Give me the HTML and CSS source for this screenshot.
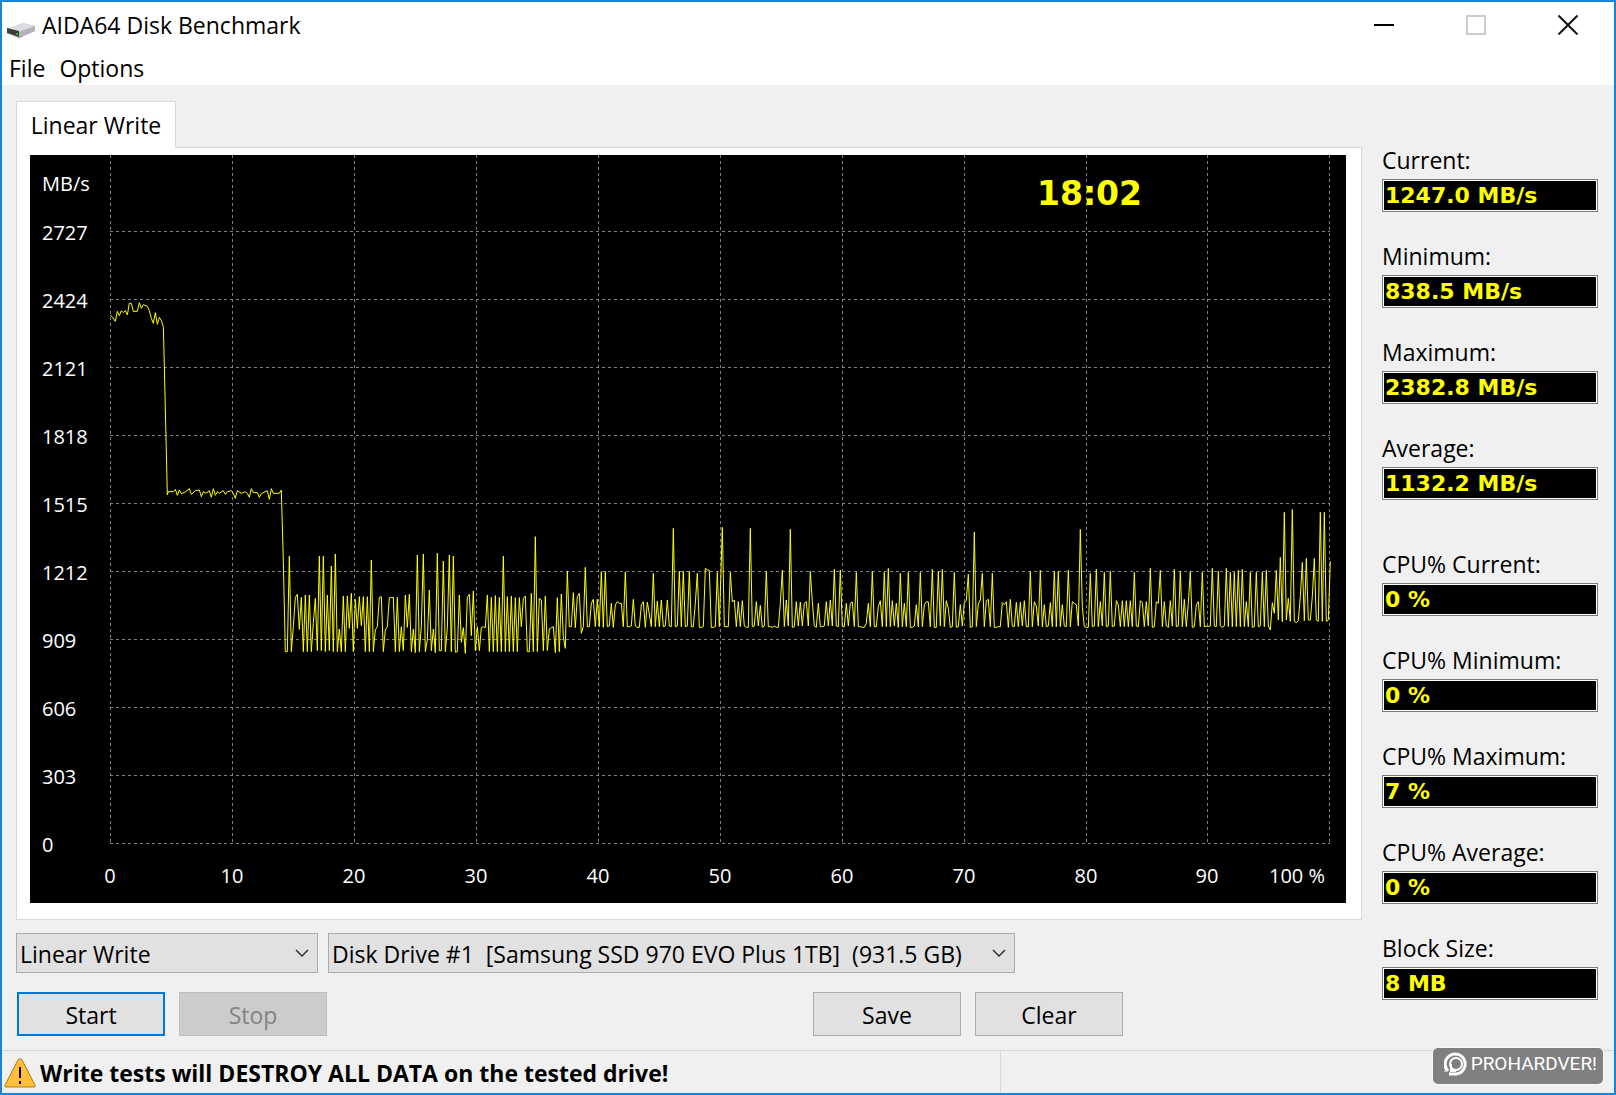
FILE: index.html
```html
<!DOCTYPE html>
<html lang="en">

<head>
    <meta charset="UTF-8">
    <meta name="viewport" content="width=device-width, initial-scale=1.0">
    <title>AIDA64 Disk Benchmark</title>
    <link rel="stylesheet" href="styles.css">
</head>

<body>
    <header class="title-bar">
        <svg class="disk-icon" width="28" height="16" viewBox="0 0 28 16">
            <path d="M0 6 L16 0 L28 3 L28 8 L12 15 L0 10z" fill="#c4c5c8" />
            <path d="M0 6 L16 0 L28 3 L12 9z" fill="#dcdde0" />
            <path d="M12 9 L28 3 L28 8 L12 15z" fill="#b4b5ba" />
            <path d="M0 5 L12 8 L12 14 L0 10z" fill="#3c3d3c" />
            <path d="M0 10 L12 14 L18 12 L12 15z" fill="#8e8f92" />
            <path d="M9 10h2v2h-2z" fill="#22b83a" />
        </svg>
        <h1>AIDA64 Disk Benchmark</h1>
        <div class="window-buttons">
            <button type="button" aria-label="Minimize">
                <svg width="20" height="20" viewBox="0 0 20 20"><path d="M0 10h20" stroke="#000" stroke-width="2" /></svg>
            </button>
            <button type="button" aria-label="Maximize" disabled>
                <svg width="20" height="20" viewBox="0 0 20 20"><path d="M1 1h18v18h-18z" fill="none" stroke="#ccc" stroke-width="2" /></svg>
            </button>
            <button type="button" aria-label="Close">
                <svg width="20" height="20" viewBox="0 0 20 20"><path d="M0.500 0.500 L19.500 19.500 M19.500 0.500 L0.500 19.500" stroke="#111" stroke-width="2" /></svg>
            </button>
        </div>
    </header>
    <nav class="menu">
        <a href="#">File</a>
        <a href="#">Options</a>
    </nav>

    <main class="content">
        <section class="left">
            <div class="tabs">
                <button class="tab" type="button">Linear Write</button>
            </div>
            <div class="panel">
                <svg class="chart" viewBox="0 0 1316 748">
                    <g id="grid" class="grid"></g>
                    <g id="labels" class="labels">
                        <text x="12" y="36">MB/s</text>
                    </g>
                    <g transform="translate(0 325) scale(0.33333)">
                        <polyline id="trace" class="trace" />
                    </g>
                    <text class="clock" x="1007" y="50">18:02</text>
                </svg>
            </div>
            <div class="row selects">
                <div class="select test-select">
                    <select aria-label="Test">
                        <option>Linear Write</option>
                    </select>
                    <svg width="14" height="8" viewBox="0 0 14 8"><path d="M1 1l6 6 6-6" /></svg>
                </div>
                <div class="select drive-select">
                    <select aria-label="Drive">
                        <option>Disk Drive #1&nbsp; [Samsung SSD 970 EVO Plus 1TB]&nbsp; (931.5 GB)</option>
                    </select>
                    <svg width="14" height="8" viewBox="0 0 14 8"><path d="M1 1l6 6 6-6" /></svg>
                </div>
            </div>
            <div class="row buttons">
                <button class="btn default" type="button">Start</button>
                <button class="btn" type="button" disabled>Stop</button>
                <button class="btn save" type="button">Save</button>
                <button class="btn" type="button">Clear</button>
            </div>
        </section>

        <aside class="side">
            <div class="field">
                <label for="current">Current:</label>
                <input type="text" id="current" value="1247.0 MB/s" readonly>
            </div>
            <div class="field">
                <label for="minimum">Minimum:</label>
                <input type="text" id="minimum" value="838.5 MB/s" readonly>
            </div>
            <div class="field">
                <label for="maximum">Maximum:</label>
                <input type="text" id="maximum" value="2382.8 MB/s" readonly>
            </div>
            <div class="field">
                <label for="average">Average:</label>
                <input type="text" id="average" value="1132.2 MB/s" readonly>
            </div>
            <div class="field cpu">
                <label for="cpu-current">CPU% Current:</label>
                <input type="text" id="cpu-current" value="0 %" readonly>
            </div>
            <div class="field">
                <label for="cpu-minimum">CPU% Minimum:</label>
                <input type="text" id="cpu-minimum" value="0 %" readonly>
            </div>
            <div class="field">
                <label for="cpu-maximum">CPU% Maximum:</label>
                <input type="text" id="cpu-maximum" value="7 %" readonly>
            </div>
            <div class="field">
                <label for="cpu-average">CPU% Average:</label>
                <input type="text" id="cpu-average" value="0 %" readonly>
            </div>
            <div class="field">
                <label for="block-size">Block Size:</label>
                <input type="text" id="block-size" value="8 MB" readonly>
            </div>
        </aside>
    </main>

    <footer class="status-bar">
        <div class="status-text">
            <svg width="32" height="30" viewBox="0 0 32 30">
                <path d="M14 2 Q16 -1 18 2 L31 27 Q32 29 30 29 H2 Q0 29 1 27z" fill="#ffbf3a" stroke="#b27a1c" />
                <path d="M15 9h2v11h-2z M15 23h2v3h-2z" fill="#000" />
            </svg>
            <span>Write tests will DESTROY ALL DATA on the tested drive!</span>
        </div>
        <div class="watermark">
            <svg width="23" height="24" viewBox="0 0 23 24">
                <path d="M4 19 A10 10 0 1 1 12 22 H5" fill="none" stroke="#fff" stroke-width="3" />
                <circle cx="12" cy="12" r="6" fill="none" stroke="#fff" stroke-width="2" />
                <path d="M7 12v7h5" fill="none" stroke="#fff" stroke-width="2" />
                <path d="M1 9v11" stroke="#fff" stroke-dasharray="2 1" />
            </svg>
            <span>PROHARDVER!</span>
        </div>
    </footer>

    <script src="script.js"></script>
</body>

</html>
```

FILE: styles.css
```css
* {
    padding: 0;
    margin: 0;
    box-sizing: border-box;
    font-family: "Open Sans", "Noto Sans", sans-serif;
}

body {
    min-height: 100vh;
    display: flex;
    flex-direction: column;
    border: 2px solid #1883d7;
    background-color: #f0f0f0;
    color: black;
    font-size: 23px;
    line-height: 32px;
}

button,
input,
select {
    font-size: 23px;
    color: black;
}

a {
    color: black;
    text-decoration: none;
}

.title-bar {
    display: flex;
    align-items: center;
    gap: 7px;
    height: 45px;
    padding-left: 5px;
    background-color: white;
}

.title-bar h1 {
    font-size: 23px;
    font-weight: normal;
}

.disk-icon {
    margin-top: 12px;
}

.window-buttons {
    display: flex;
    margin-left: auto;
}

.window-buttons button {
    display: flex;
    justify-content: center;
    align-items: center;
    width: 92px;
    height: 44px;
    border: none;
    background-color: white;
}

.menu {
    display: flex;
    gap: 14px;
    height: 38px;
    padding: 5px 7px;
    background-color: white;
}

.content {
    display: flex;
    gap: 20px;
    padding: 16px 16px 14px 14px;
}

.left {
    flex: 1;
}

.tabs {
    display: flex;
}

.tab {
    position: relative;
    height: 47px;
    width: 160px;
    margin-bottom: -1px;
    padding-bottom: 1px;
    border: 1px solid #d9d9d9;
    border-bottom: none;
    background-color: white;
}

.panel {
    padding: 7px 15px 16px 13px;
    border: 1px solid #d9d9d9;
    background-color: white;
}

.chart {
    display: block;
    width: 100%;
    background-color: black;
}

.grid line {
    stroke: #808080;
    stroke-dasharray: 3 3;
    shape-rendering: crispEdges;
}

.labels text {
    fill: white;
    font-size: 20px;
    white-space: pre;
}

.labels .percent {
    text-anchor: middle;
}

.trace {
    fill: none;
    stroke: #ff0;
    stroke-width: 3px;
    stroke-linejoin: bevel;
    shape-rendering: crispEdges;
}

.clock {
    fill: #ff0;
    font-family: "DejaVu Sans", sans-serif;
    font-size: 33px;
    font-weight: bold;
}

.row {
    display: flex;
}

.selects {
    gap: 10px;
    margin-top: 13px;
}

.select {
    display: grid;
    align-items: center;
}

.select select,
.select svg {
    grid-area: 1 / 1;
}

.select select {
    appearance: none;
    height: 40px;
    padding: 2px 0 0 3px;
    border: 1px solid #adadad;
    background-color: #e1e1e1;
}

.select svg {
    justify-self: end;
    margin-right: 9px;
    fill: none;
    stroke: #333;
    stroke-width: 1.500;
    pointer-events: none;
}

.test-select {
    width: 302px;
}

.drive-select {
    width: 687px;
}

.buttons {
    gap: 14px;
    margin-top: 19px;
    padding-left: 1px;
}

.btn {
    width: 148px;
    height: 44px;
    padding-top: 2px;
    border: 1px solid #adadad;
    background-color: #e1e1e1;
}

.btn.default {
    border: 2px solid #0078d7;
}

.btn:disabled {
    border-color: #bfbfbf;
    background-color: #ccc;
    color: #838383;
}

.btn.save {
    margin-left: 472px;
}

.side {
    display: flex;
    flex-direction: column;
    gap: 28px;
    width: 216px;
    padding-top: 43px;
}

.field {
    display: flex;
    flex-direction: column;
    gap: 3px;
}

.field.cpu {
    margin-top: 20px;
}

.field input {
    width: 100%;
    height: 33px;
    padding-left: 2px;
    border: 1px solid #7a7a7a;
    outline: 1px solid white;
    outline-offset: -2px;
    background-color: black;
    color: #ff0;
    font-family: "DejaVu Sans", sans-serif;
    font-size: 22px;
    font-weight: bold;
}

.status-bar {
    position: relative;
    flex: 1;
    display: flex;
    border-top: 1px solid #d7d7d7;
}

.status-text {
    display: flex;
    align-items: center;
    gap: 4px;
    width: 62%;
    margin: 1px 0;
    padding: 2px 0 0 2px;
    border-right: 1px solid #d7d7d7;
    font-weight: bold;
}

.watermark {
    position: absolute;
    right: 11px;
    top: -3px;
    display: flex;
    align-items: center;
    gap: 4px;
    height: 36px;
    padding: 0 6px 4px 11px;
    border-radius: 5px;
    box-shadow: 0 0 0 1px #f8f8f8;
    background-color: #808080;
    color: white;
}

.watermark span {
    font-family: Roboto, sans-serif;
    font-size: 19px;
}
```

FILE: script.js
```javascript
const svgNS = "http://www.w3.org/2000/svg";
let grid = document.getElementById("grid");
let labels = document.getElementById("labels");

function addLine(x1, y1, x2, y2) {
    let line = document.createElementNS(svgNS, "line");
    line.setAttribute("x1", x1);
    line.setAttribute("y1", y1);
    line.setAttribute("x2", x2);
    line.setAttribute("y2", y2);
    grid.appendChild(line);
}

function addLabel(x, y, value, className) {
    let text = document.createElementNS(svgNS, "text");
    text.setAttribute("x", x);
    text.setAttribute("y", y);
    if (className) text.setAttribute("class", className);
    text.textContent = value;
    labels.appendChild(text);
}

// speed rows, 303 MB/s apart
for (let i = 0; i < 10; i++) {
    let y = 688 - i * 68;
    addLine(80, y + 0.5, 1300, y + 0.5);
    addLabel(12, y + 9, i * 303);
}

// progress columns, 10% apart
for (let i = 0; i <= 10; i++) {
    let x = 80 + Math.round(i * 121.94);
    addLine(x + 0.5, 0, x + 0.5, 688);
    if (i < 10) addLabel(x, 728, i * 10, "percent");
}
addLabel(1239, 728, "100 %");

// cached part of the drive: x, y pairs
let points = [
    [241, -495], [248, -487], [256, -476], [262, -506], [268, -493], [274, -508], [280, -502], [286, -508],
    [292, -495], [298, -530], [304, -530], [310, -506], [322, -506], [328, -532], [334, -515], [340, -526],
    [352, -521], [358, -508], [364, -485], [370, -470], [376, -502], [382, -467], [388, -488], [394, -478],
    [400, -460], [404, -300], [412, 45], [415, 35], [430, 35], [436, 28], [442, 46], [448, 30], [454, 41],
    [466, 36], [478, 26], [484, 43], [496, 32], [508, 30], [514, 50], [520, 35], [528, 40], [538, 32],
    [544, 52], [550, 26], [556, 46], [562, 35], [568, 40], [580, 32], [586, 43], [592, 35], [604, 32],
    [610, 40], [616, 55], [622, 32], [634, 40], [646, 35], [652, 40], [658, 52], [664, 26], [670, 38],
    [682, 38], [688, 52], [694, 41], [712, 32], [718, 58], [724, 26], [730, 40], [748, 40]
];

// evenly spaced samples
let runs = [
    {
        x: 754,
        y: [
            30, 245, 515, 515, 228, 515, 440, 352, 343, 448, 352, 515, 345, 515, 345, 515, 430, 355, 512, 228,
            512, 228, 515, 345, 512, 258, 515, 222, 515, 447, 515, 348, 515, 348, 445, 340, 515, 358, 445, 350,
            437, 350, 515, 350, 515, 240, 515, 450, 440, 352, 350, 515, 450, 440, 353, 353, 352, 515, 352, 515,
            440, 512, 345, 442, 343, 515, 447, 518, 225, 515, 440, 222, 515, 480, 330, 512, 447, 518, 220, 512,
            512, 243, 515, 445, 225, 515, 228, 517, 515, 345, 487, 443, 520, 352, 343, 467, 333, 512, 440, 512,
            443, 440, 443, 345, 515, 352, 515, 347, 515, 352, 515, 228, 515, 350, 515, 348, 515, 353, 515, 353,
            440, 355, 348, 515, 515, 340, 515, 170, 515, 355, 360, 512, 348, 512, 447, 443, 440, 518, 353, 515,
            342, 470, 505, 273, 440, 440, 338, 443, 350, 340,
            460, 440, 262, 440, 440, 370, 358, 440, 358, 440, 275, 442, 274, 440, 438, 370, 442, 375, 365, 370,
            370, 440, 276, 440, 440, 438, 358, 438, 442, 442, 375, 365, 442, 366, 402, 440, 280, 440, 363, 440,
            360, 440, 438, 360, 438, 440, 145, 440, 438, 274, 440, 274, 440, 438, 274, 440, 440, 370, 280, 442,
            442, 440, 265, 270, 271, 442, 442, 440, 277, 440
        ]
    },
    {
        x: 2077,
        y: [
            142, 440, 440, 440, 277, 366, 360, 440, 365, 440, 362, 438, 442, 442, 145, 440, 438, 365, 438, 376,
            442, 438, 274, 440, 440, 442, 438, 442, 442, 370, 271, 440, 360, 438, 148, 442, 440, 365, 438, 366,
            438, 370, 365, 438, 274, 365, 438, 442, 370, 440, 440, 438, 365, 438, 360, 438, 268, 438, 440, 270,
            440, 440, 370, 438, 370, 366, 440, 277, 440,
            440, 442, 442, 430, 370, 440, 274, 440, 440, 380, 362, 440, 277, 440, 265, 440, 362, 438, 370, 442,
            280, 440, 370, 440, 277, 442, 442, 438, 374, 440, 277, 440, 375, 365, 366, 440, 268, 442, 442, 274,
            438, 268, 440, 362, 385, 442, 440, 277, 442, 440, 374, 438, 367, 362, 283, 442, 440, 156, 440, 372,
            360, 280, 440, 362, 358, 440, 280, 442, 442, 440, 440, 368, 374, 365, 442, 358, 438, 440, 367, 440,
            367, 438, 362, 440, 440, 274, 440, 365, 378, 438, 271, 440, 374, 440, 438, 368, 440, 274, 440, 274,
            440, 374, 438, 440, 271, 440, 365, 370, 374, 438, 148, 380, 440, 442, 442, 280, 440, 438, 268, 440,
            365, 438, 277, 440, 438, 274, 440, 438, 362, 375, 440, 362, 440, 362, 440, 362, 440, 277, 438, 440,
            362, 368, 440, 365, 438, 265, 442, 440, 365, 370, 271, 440, 365, 438, 442, 362, 438, 268, 440, 438,
            274, 440, 358, 440, 370, 274, 442, 440, 374, 365, 440, 277, 440, 439, 439, 438, 265, 438, 440, 274,
            438, 442, 438, 265, 440, 277, 440, 277, 440, 271, 440, 268, 440, 365, 440, 277, 442, 440, 277, 440,
            438, 277, 440, 271, 438, 450, 368, 400, 271, 420, 232, 425, 97, 420, 355, 424, 88, 424, 428, 422,
            350, 247, 422, 235, 420, 420, 350, 235, 420, 424, 97, 424, 97, 424, 420, 243
        ]
    }
];

for (let run of runs) {
    run.y.forEach((y, i) => points.push([run.x + i * 6, y]));
}
document.getElementById("trace").setAttribute("points", points.join(" "));
```
